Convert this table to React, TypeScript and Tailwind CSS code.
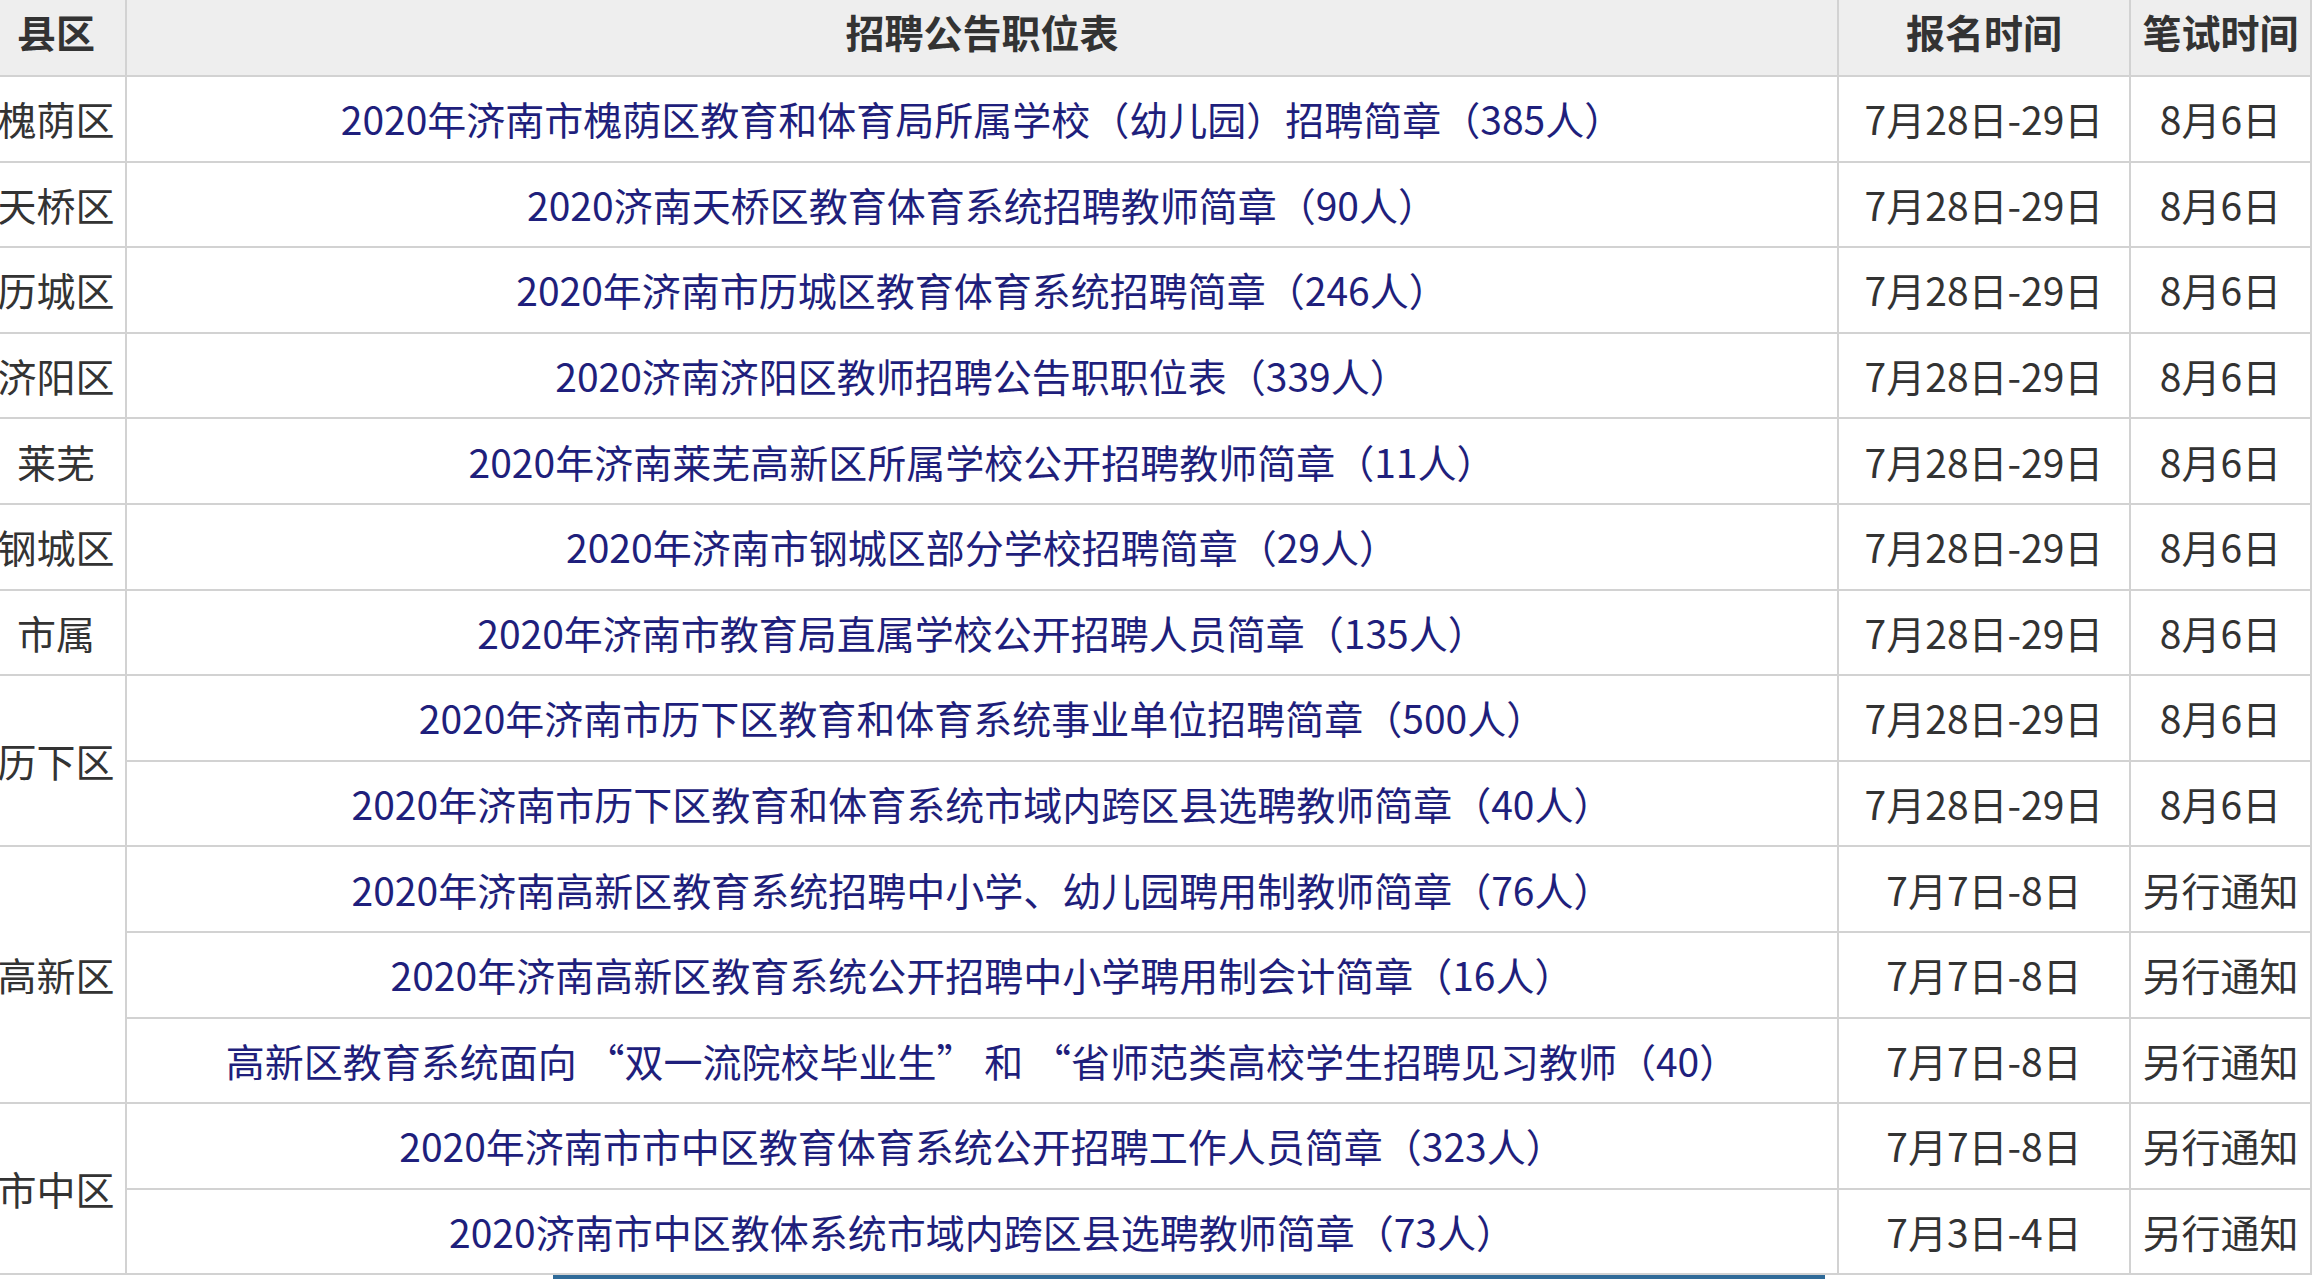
import React from "react";

type Row = {
  district?: string;
  span?: number;
  title: string;
  signup: string;
  exam: string;
};

const rows: Row[] = [
  { district: "槐荫区", title: "2020年济南市槐荫区教育和体育局所属学校（幼儿园）招聘简章（385人）", signup: "7月28日-29日", exam: "8月6日" },
  { district: "天桥区", title: "2020济南天桥区教育体育系统招聘教师简章（90人）", signup: "7月28日-29日", exam: "8月6日" },
  { district: "历城区", title: "2020年济南市历城区教育体育系统招聘简章（246人）", signup: "7月28日-29日", exam: "8月6日" },
  { district: "济阳区", title: "2020济南济阳区教师招聘公告职职位表（339人）", signup: "7月28日-29日", exam: "8月6日" },
  { district: "莱芜", title: "2020年济南莱芜高新区所属学校公开招聘教师简章（11人）", signup: "7月28日-29日", exam: "8月6日" },
  { district: "钢城区", title: "2020年济南市钢城区部分学校招聘简章（29人）", signup: "7月28日-29日", exam: "8月6日" },
  { district: "市属", title: "2020年济南市教育局直属学校公开招聘人员简章（135人）", signup: "7月28日-29日", exam: "8月6日" },
  { district: "历下区", span: 2, title: "2020年济南市历下区教育和体育系统事业单位招聘简章（500人）", signup: "7月28日-29日", exam: "8月6日" },
  { title: "2020年济南市历下区教育和体育系统市域内跨区县选聘教师简章（40人）", signup: "7月28日-29日", exam: "8月6日" },
  { district: "高新区", span: 3, title: "2020年济南高新区教育系统招聘中小学、幼儿园聘用制教师简章（76人）", signup: "7月7日-8日", exam: "另行通知" },
  { title: "2020年济南高新区教育系统公开招聘中小学聘用制会计简章（16人）", signup: "7月7日-8日", exam: "另行通知" },
  { title: "高新区教育系统面向 “双一流院校毕业生” 和 “省师范类高校学生招聘见习教师（40）", signup: "7月7日-8日", exam: "另行通知" },
  { district: "市中区", span: 2, title: "2020年济南市市中区教育体育系统公开招聘工作人员简章（323人）", signup: "7月7日-8日", exam: "另行通知" },
  { title: "2020济南市中区教体系统市域内跨区县选聘教师简章（73人）", signup: "7月3日-4日", exam: "另行通知" },
];

const cell = "border-2 border-[#d2d2d2] text-center align-middle whitespace-nowrap p-0";

export default function App() {
  return (
    <div
      lang="zh-CN"
      className="w-[2317px] h-[1280px] overflow-hidden bg-white text-[#333333] text-[39px] leading-none"
      style={{ fontFamily: '"Noto Sans CJK SC", "Noto Sans", sans-serif' }}
    >
      {/* job table */}
      <table className="table-fixed border-collapse -ml-[15px] w-[2325px]">
        <colgroup>
          <col className="w-[140px]" />
          <col className="w-[1712px]" />
          <col className="w-[292px]" />
          <col className="w-[181px]" />
        </colgroup>
        <thead>
          <tr className="h-[76px] bg-[#eeeeee]">
            <th className={`${cell} border-t-0 font-bold pb-[12px]`}>县区</th>
            <th className={`${cell} border-t-0 font-bold pb-[12px]`}>招聘公告职位表</th>
            <th className={`${cell} border-t-0 font-bold pb-[12px]`}>报名时间</th>
            <th className={`${cell} border-t-0 font-bold pb-[12px]`}>笔试时间</th>
          </tr>
        </thead>
        <tbody>
          {rows.map((r, i) => (
            <tr key={i} className="h-[85.6px]">
              {r.district && (
                <td className={cell} rowSpan={r.span ?? 1}>
                  {r.district}
                </td>
              )}
              <td className={cell}>
                <a className="text-[#1f1f7c] no-underline">{r.title}</a>
              </td>
              <td className={cell}>{r.signup}</td>
              <td className={cell}>{r.exam}</td>
            </tr>
          ))}
        </tbody>
      </table>
      <div className="ml-[553px] w-[1272px] h-[4px] bg-[#2f6a98]" />
    </div>
  );
}
